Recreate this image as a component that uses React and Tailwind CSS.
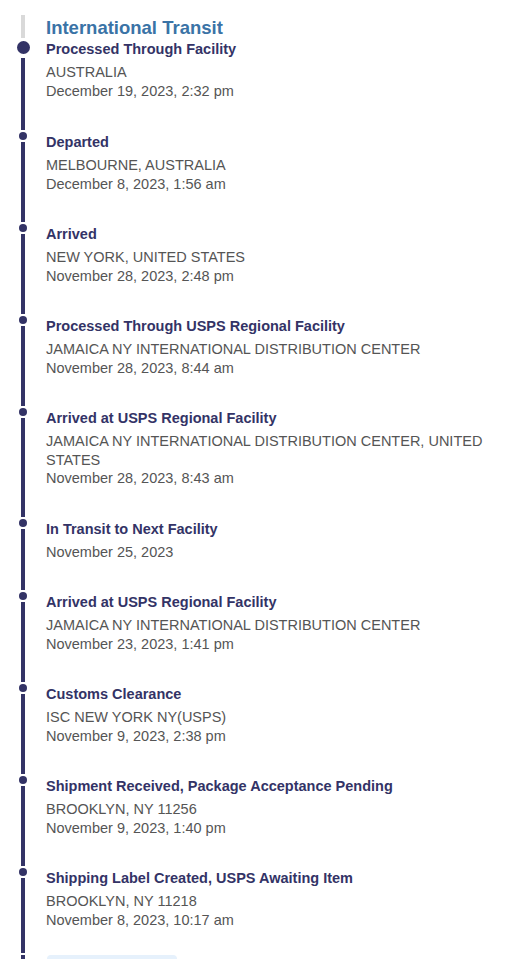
const events = [
  {
    title: 'Processed Through Facility',
    lines: ['AUSTRALIA', 'December 19, 2023, 2:32 pm'],
  },
  {
    title: 'Departed',
    lines: ['MELBOURNE, AUSTRALIA', 'December 8, 2023, 1:56 am'],
  },
  {
    title: 'Arrived',
    lines: ['NEW YORK, UNITED STATES', 'November 28, 2023, 2:48 pm'],
  },
  {
    title: 'Processed Through USPS Regional Facility',
    lines: ['JAMAICA NY INTERNATIONAL DISTRIBUTION CENTER', 'November 28, 2023, 8:44 am'],
  },
  {
    title: 'Arrived at USPS Regional Facility',
    lines: ['JAMAICA NY INTERNATIONAL DISTRIBUTION CENTER, UNITED STATES', 'November 28, 2023, 8:43 am'],
  },
  {
    title: 'In Transit to Next Facility',
    lines: ['November 25, 2023'],
  },
  {
    title: 'Arrived at USPS Regional Facility',
    lines: ['JAMAICA NY INTERNATIONAL DISTRIBUTION CENTER', 'November 23, 2023, 1:41 pm'],
  },
  {
    title: 'Customs Clearance',
    lines: ['ISC NEW YORK NY(USPS)', 'November 9, 2023, 2:38 pm'],
  },
  {
    title: 'Shipment Received, Package Acceptance Pending',
    lines: ['BROOKLYN, NY 11256', 'November 9, 2023, 1:40 pm'],
  },
  {
    title: 'Shipping Label Created, USPS Awaiting Item',
    lines: ['BROOKLYN, NY 11218', 'November 8, 2023, 10:17 am'],
  },
]

function EventRow({ event, first, last }) {
  return (
    <div className="flex">
      <div className="w-[46px] shrink-0 flex flex-col items-center">
        {first ? (
          <div className="mt-[2px] w-[13px] h-[13px] rounded-full bg-[#333366]" />
        ) : (
          <div className="w-[8px] h-[8px] rounded-full bg-[#333366]" />
        )}
        <div className={`w-[4px] flex-1 bg-[#333366] ${first ? 'mt-[4px]' : 'mt-[2px]'} mb-[2px]`} />
      </div>
      <div className={`flex-1 pr-[12px] ${last ? 'pb-[26px]' : first ? 'pb-[32px]' : 'pb-[31px]'}`}>
        <div className="text-[14.5px] leading-[20px] font-bold text-[#333366]">{event.title}</div>
        <div className="mt-[4px] text-[14.5px] leading-[18.5px] text-[#555555]">
          {event.lines.map((l, i) => (
            <div key={i}>{l}</div>
          ))}
        </div>
      </div>
    </div>
  )
}

export default function App() {
  return (
    <div
      className="w-[509px] h-[959px] overflow-hidden bg-white"
      style={{ fontFamily: '"Liberation Sans", Arial, sans-serif' }}
    >
      <div className="pt-[15px] flex flex-col">
        <div className="flex h-[24px]">
          <div className="w-[46px] shrink-0 flex justify-center">
            <div className="w-[4px] h-[23px] bg-[#d9d9d9]" />
          </div>
          <h2 className="flex-1 pt-[2px] text-[18.5px] leading-[22px] font-bold text-[#3a73a6] whitespace-nowrap">
            International Transit
          </h2>
        </div>
        {events.map((e, i) => (
          <EventRow key={i} event={e} first={i === 0} last={i === events.length - 1} />
        ))}
        <div className="flex h-[20px]">
          <div className="w-[46px] shrink-0 flex justify-center">
            <div className="w-[4px] h-full bg-[#333366]" />
          </div>
          <div className="ml-[1px] w-[130px] h-[20px] rounded-[4px] bg-[#e6f1fc]" />
        </div>
      </div>
    </div>
  )
}
